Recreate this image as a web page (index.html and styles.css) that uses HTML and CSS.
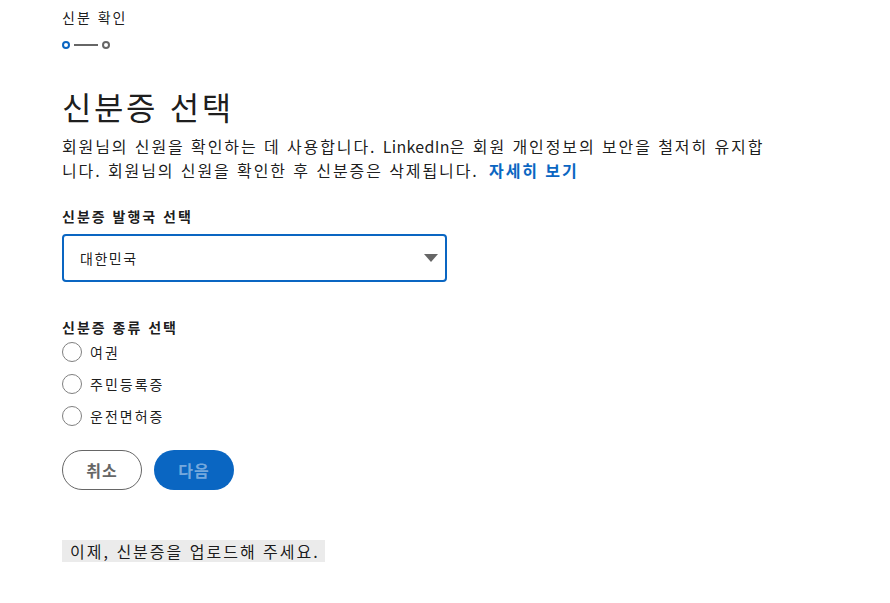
FILE: index.html
```html
<!DOCTYPE html>
<html lang="ko">
<head>
    <meta charset="UTF-8">
    <meta name="viewport" content="width=device-width, initial-scale=1.0">
    <title>신분 확인</title>
    <link rel="stylesheet" href="styles.css">
</head>
<body>
    <div class="container">
        <div class="step-title">신분 확인</div>
        <div class="progress">
            <span class="dot active"></span>
            <span class="bar"></span>
            <span class="dot"></span>
        </div>

        <h1>신분증 선택</h1>
        <p class="intro">회원님의 신원을 확인하는 데 사용합니다. <span class="brand">LinkedIn</span>은 회원 개인정보의 보안을 철저히 유지합니다. 회원님의 신원을 확인한 후 신분증은 삭제됩니다. <a href="#" class="more">자세히 보기</a></p>

        <div class="field">
            <label class="field-label" for="country">신분증 발행국 선택</label>
            <div class="select-wrap">
                <select id="country" class="select">
                    <option>대한민국</option>
                </select>
                <svg class="caret" width="14" height="8" viewBox="0 0 14 8"><path d="M0 0h14L7 8z" fill="#666"/></svg>
            </div>
        </div>

        <div class="field types">
            <div class="field-label">신분증 종류 선택</div>
            <label class="radio"><input type="radio" name="idtype"><span class="circle"></span>여권</label>
            <label class="radio"><input type="radio" name="idtype"><span class="circle"></span>주민등록증</label>
            <label class="radio"><input type="radio" name="idtype"><span class="circle"></span>운전면허증</label>
        </div>

        <div class="actions">
            <button class="btn btn-outline">취소</button>
            <button class="btn btn-primary" disabled>다음</button>
        </div>

        <div class="notice">이제, 신분증을 업로드해 주세요.</div>
    </div>
</body>
</html>
```

FILE: styles.css
```css
:root {
    --primary-color: #0a66c2;
    --text-color: rgba(0, 0, 0, 0.9);
    --muted: #666666;
}

* {
    margin: 0;
    padding: 0;
    box-sizing: border-box;
}

body {
    font-family: "Noto Sans CJK KR", "Noto Sans", sans-serif;
    color: var(--text-color);
    background: #ffffff;
    letter-spacing: 2px;
}

.container {
    padding: 7px 0 0 62px;
}

.step-title {
    font-size: 14px;
    line-height: 20px;
}

.progress {
    display: flex;
    align-items: center;
    margin-top: 14px;
    height: 8px;
}

.dot {
    width: 8px;
    height: 8px;
    border-radius: 50%;
    border: 2px solid var(--muted);
}

.dot.active {
    border-color: var(--primary-color);
}

.bar {
    width: 24px;
    height: 2px;
    margin: 0 4px;
    background: var(--muted);
}

h1 {
    font-size: 32px;
    font-weight: 400;
    line-height: 40px;
    margin-top: 37px;
    letter-spacing: 2.6px;
}

.intro {
    font-size: 16px;
    line-height: 24px;
    max-width: 712px;
    margin-top: 8px;
    letter-spacing: 1.9px;
}

.brand {
    letter-spacing: 0.3px;
}

.more {
    color: var(--primary-color);
    font-weight: 700;
    text-decoration: none;
    margin-left: 4px;
}

.field {
    margin-top: 24px;
}

.field-label {
    display: block;
    font-size: 14px;
    font-weight: 700;
    line-height: 20px;
}

.select-wrap {
    position: relative;
    width: 385px;
    margin-top: 8px;
}

.select {
    appearance: none;
    -webkit-appearance: none;
    width: 100%;
    height: 48px;
    padding: 0 40px 0 16px;
    border: 2px solid var(--primary-color);
    border-radius: 4px;
    background: #ffffff;
    font-family: inherit;
    font-size: 14px;
    letter-spacing: 1.5px;
    color: var(--text-color);
    outline: none;
}

.caret {
    position: absolute;
    right: 9px;
    top: 20px;
    pointer-events: none;
}

.types {
    margin-top: 35px;
}

.radio {
    display: flex;
    align-items: center;
    height: 32px;
    font-size: 14px;
    cursor: pointer;
}

.radio:first-of-type {
    margin-top: -1px;
}

.radio input {
    display: none;
}

.circle {
    width: 20px;
    height: 20px;
    border-radius: 50%;
    border: 1.5px solid #808080;
    margin-right: 8px;
}

.actions {
    display: flex;
    gap: 12px;
    margin-top: 18px;
}

.btn {
    width: 80px;
    height: 40px;
    border-radius: 20px;
    font-family: inherit;
    font-size: 16px;
    font-weight: 700;
    letter-spacing: 1px;
    cursor: pointer;
}

.btn-outline {
    background: #ffffff;
    border: 1px solid var(--muted);
    color: var(--muted);
}

.btn-primary {
    background: var(--primary-color);
    border: none;
    color: rgba(255, 255, 255, 0.45);
}

.notice {
    display: inline-block;
    margin-top: 50px;
    padding: 0 5px 0 8px;
    background: #ebebeb;
    font-size: 16px;
    line-height: 22px;
}
```
